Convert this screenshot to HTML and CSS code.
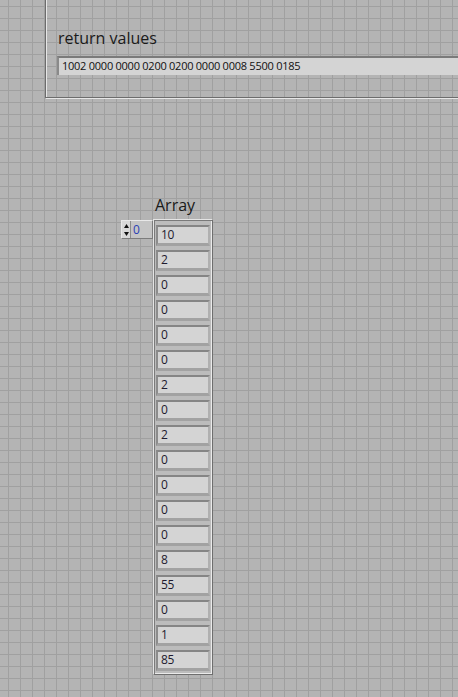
FILE: index.html
```html
<!DOCTYPE html>
<html lang="en">
<head>
<meta charset="UTF-8">
<title>Front Panel</title>
<link rel="stylesheet" href="styles.css">
</head>
<body>
<div class="panel">
<div class="label">return values</div>
<div class="string-field">1002 0000 0000 0200 0200 0000 0008 5500 0185</div>
</div>
<div class="array-block">
<div class="index">
<div class="spinner">
<svg width="7" height="16" viewBox="0 0 7 16"><path d="M3.5 2 L6 6 L1 6 Z" fill="#111"/><path d="M1 10 L6 10 L3.5 14 Z" fill="#111"/></svg>
</div>
<span class="index-value">0</span>
</div>
<div class="array-col">
<div class="array-label">Array</div>
<div class="array-frame">
<div class="cell">10</div>
<div class="cell">2</div>
<div class="cell">0</div>
<div class="cell">0</div>
<div class="cell">0</div>
<div class="cell">0</div>
<div class="cell">2</div>
<div class="cell">0</div>
<div class="cell">2</div>
<div class="cell">0</div>
<div class="cell">0</div>
<div class="cell">0</div>
<div class="cell">0</div>
<div class="cell">8</div>
<div class="cell">55</div>
<div class="cell">0</div>
<div class="cell">1</div>
<div class="cell">85</div>
</div>
</div>
</div>
</body>
</html>
```
FILE: styles.css
```css
html, body {
    margin: 0;
    padding: 0;
    overflow: hidden;
}
body {
    width: 458px;
    height: 697px;
    font-family: "Open Sans", sans-serif;
    background-color: #b4b4b4;
    background-image:
        linear-gradient(to right, #a0a0a0 1px, transparent 1px),
        linear-gradient(to bottom, #a0a0a0 1px, transparent 1px);
    background-size: 12px 12px;
    background-position: 8px 6px;
}
/* etched frame around the cluster */
.panel {
    margin-left: 45px;
    width: 413px;
    height: 98px;
    overflow: hidden;
    border-left: 1px solid #6c6c6c;
    border-bottom: 1px solid #6c6c6c;
    box-shadow: 1px 1px 0 #e6e6e6, inset 1px 0 0 #e6e6e6;
    padding: 28px 0 0 12px;
    box-sizing: border-box;
}
.label {
    font-size: 16px;
    line-height: 20px;
    color: #1a1a1a;
}
.string-field {
    margin-top: 8px;
    margin-left: -1px;
    width: 420px;
    height: 19px;
    box-sizing: border-box;
    background: #d4d4d4;
    border-top: 2px solid #7a7a7a;
    border-left: 2px solid #8a8a8a;
    padding-left: 3px;
    font-size: 11px;
    letter-spacing: -0.25px;
    line-height: 15px;
    color: #111;
}
.array-block {
    display: flex;
    align-items: flex-start;
    margin: 97px 0 0 121px;
}
.index {
    display: flex;
    align-items: center;
    margin-top: 25px;
    width: 32px;
    height: 19px;
    box-sizing: border-box;
    background: #c4c4c4;
    border-top: 1px solid #e8e8e8;
    border-left: 1px solid #e8e8e8;
    border-right: 1px solid #7c7c7c;
    border-bottom: 1px solid #7c7c7c;
}
.spinner {
    width: 8px;
    height: 17px;
    background: #d8d8d8;
    border-right: 1px solid #8c8c8c;
    display: flex;
    align-items: center;
    justify-content: center;
}
.index-value {
    margin-left: 2px;
    font-size: 12px;
    color: #2b3fb4;
}
.array-col {
    display: flex;
    flex-direction: column;
}
.array-label {
    padding-left: 2px;
    font-size: 16px;
    line-height: 20px;
    height: 24px;
    color: #1a1a1a;
}
.array-frame {
    width: 60px;
    box-sizing: border-box;
    display: flex;
    flex-direction: column;
    gap: 4px;
    padding: 5px 2px 3px 2px;
    background: #bcbcbc;
    border-top: 1px solid #e4e4e4;
    border-left: 1px solid #e4e4e4;
    border-right: 1px solid #6e6e6e;
    border-bottom: 1px solid #6e6e6e;
    box-shadow: inset 1px 1px 0 #7a7a7a, inset -1px -1px 0 #eaeaea;
}
.cell {
    height: 21px;
    box-sizing: border-box;
    background: #d4d4d4;
    border-top: 2px solid #858585;
    border-left: 2px solid #8c8c8c;
    border-right: 2px solid #b0b0b0;
    border-bottom: 3px solid #a2a2a2;
    padding-left: 3px;
    font-size: 12px;
    letter-spacing: -0.3px;
    line-height: 15px;
    color: #1e1a2e;
}
```
